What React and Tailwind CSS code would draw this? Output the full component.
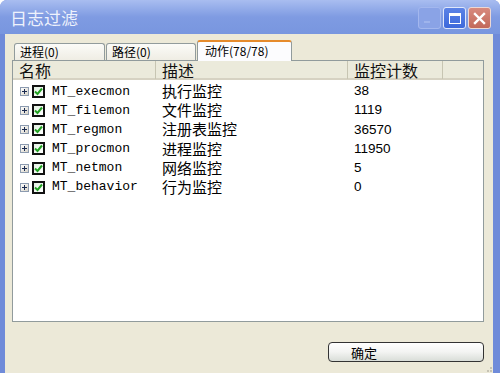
const rows = [
  { name: "MT_execmon", desc: "执行监控", count: "38" },
  { name: "MT_filemon", desc: "文件监控", count: "1119" },
  { name: "MT_regmon", desc: "注册表监控", count: "36570" },
  { name: "MT_procmon", desc: "进程监控", count: "11950" },
  { name: "MT_netmon", desc: "网络监控", count: "5" },
  { name: "MT_behavior", desc: "行为监控", count: "0" },
];

const CJK = "font-['Noto_Sans_CJK_SC',sans-serif]";

export default function App() {
  return (
    <div className="w-[500px] h-[373px] flex flex-col overflow-hidden rounded-t-[7px] bg-[#6f8bd9] select-none">
      {/* title bar */}
      <div className="h-[34px] flex items-center pl-[10px] pr-[9px] bg-gradient-to-b from-[#a9bdf0] via-[#7f9be2] to-[#7896df]">
        <span className={`text-[17px] leading-none text-[#eef2fc] ${CJK}`}>日志过滤</span>
        <div className="ml-auto flex gap-[2px] pt-[2px]">
          <div className="w-[23px] h-[22px] rounded-[3px] border border-[#a3b7ee] bg-[#8aa3e6] flex items-end justify-start pl-[5px] pb-[5px]">
            <div className="w-[6px] h-[2px] bg-[#9fb4ec]" />
          </div>
          <div className="w-[23px] h-[22px] rounded-[3px] border border-[#dfe7fb] bg-gradient-to-b from-[#5c83e6] to-[#3c68db] flex items-center justify-center">
            <div className="w-[12px] h-[11px] border border-white border-t-[3px]" />
          </div>
          <div className="w-[23px] h-[22px] rounded-[3px] border border-[#ecd8d4] bg-gradient-to-b from-[#d88a7e] to-[#c2695a] flex items-center justify-center">
            <svg width="13" height="13" viewBox="0 0 13 13">
              <path d="M2 2 L11 11 M11 2 L2 11" stroke="white" strokeWidth="2.4" strokeLinecap="square" />
            </svg>
          </div>
        </div>
      </div>

      {/* body */}
      <div className="flex-1 ml-[5px] mr-[7px] bg-[#ece9d8] flex flex-col pt-[6px] pl-[7px] pr-[9px] relative">
        {/* tabs */}
        <div className={`h-[20px] flex items-end pl-[2px] relative z-10 text-[12px] text-black ${CJK}`}>
          <div className="w-[91px] h-[17px] border border-b-0 border-[#919b9c] rounded-t-[3px] bg-gradient-to-b from-[#fbfbf8] to-[#efede4] pl-[5px] leading-[16px]">
            进程(0)
          </div>
          <div className="w-[90px] ml-[1px] h-[17px] border border-b-0 border-[#919b9c] rounded-t-[3px] bg-gradient-to-b from-[#fbfbf8] to-[#efede4] pl-[5px] leading-[16px]">
            路径(0)
          </div>
          <div className="w-[95px] ml-[1px] h-[21px] -mb-[1px] border border-b-0 border-[#919b9c] border-t-[#e68b2c] border-t-2 rounded-t-[3px] bg-[#fcfcfe] pl-[7px] leading-[17px]">
            动作(78/78)
          </div>
        </div>

        {/* list */}
        <div className="h-[262px] border border-[#919b9c] bg-white flex flex-col">
          <div className={`h-[19px] grid grid-cols-[143px_192px_95px_1fr] bg-[#ebeadb] border-b-2 border-[#d6d2c2] text-[16px] leading-[18px] text-[#111] ${CJK}`}>
            <div className="pl-[6px] border-r border-[#c7c5b2]">名称</div>
            <div className="pl-[6px] border-r border-[#c7c5b2]">描述</div>
            <div className="pl-[6px] border-r border-[#c7c5b2]">监控计数</div>
            <div />
          </div>
          <div>
            {rows.map((r) => (
              <div key={r.name} className="h-[19.2px] grid grid-cols-[143px_192px_95px_1fr] items-center">
                <div className="flex items-center pl-[7px]">
                  <div className="w-[9px] h-[9px] border border-[#8c9bb0] bg-gradient-to-br from-white to-[#d8d4c8] flex items-center justify-center">
                    <svg width="7" height="7" viewBox="0 0 7 7">
                      <path d="M1 3.5 H6 M3.5 1 V6" stroke="#1a2a50" strokeWidth="1" />
                    </svg>
                  </div>
                  <div className="ml-[3px] w-[13px] h-[13px] border-2 border-[#111] bg-gradient-to-br from-[#e2f0e2] to-white flex items-center justify-center">
                    <svg width="9" height="9" viewBox="0 0 9 9">
                      <path d="M1 4.5 L3.5 7 L8 1.5" stroke="#21a121" strokeWidth="2" fill="none" />
                    </svg>
                  </div>
                  <span className="ml-[7px] font-['Liberation_Mono',monospace] text-[13px] text-black">{r.name}</span>
                </div>
                <div className={`pl-[6px] text-[15px] text-black ${CJK}`}>{r.desc}</div>
                <div className="pl-[6px] font-['Liberation_Sans',sans-serif] text-[13.5px] text-black">{r.count}</div>
                <div />
              </div>
            ))}
          </div>
        </div>

        {/* footer */}
        <div className="mt-[20px] flex justify-end">
          <button className={`w-[156px] h-[20px] rounded-[4px] border-[1.5px] border-[#333] bg-gradient-to-b from-white via-[#f3f4f2] to-[#d9ddd8] text-left pl-[22px] text-[13px] leading-[17px] text-black ${CJK}`}>
            确定
          </button>
        </div>
        <div className="absolute right-[1px] bottom-[1px] grid grid-cols-3 gap-[1px]">
          <div />
          <div />
          <div className="w-[2px] h-[2px] bg-[#c6c3b4]" />
          <div />
          <div className="w-[2px] h-[2px] bg-[#c6c3b4]" />
          <div className="w-[2px] h-[2px] bg-[#c6c3b4]" />
        </div>
      </div>
    </div>
  );
}
